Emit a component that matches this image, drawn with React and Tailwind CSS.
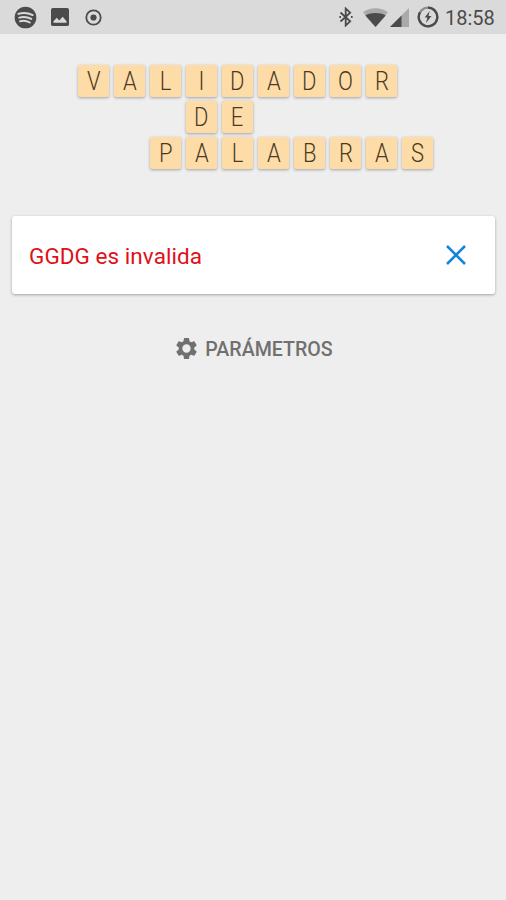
const WORDS = [
  { text: 'VALIDADOR', indent: '' },
  { text: 'DE', indent: 'pl-[108px]' },
  { text: 'PALABRAS', indent: 'pl-[72px]' },
];

function Tile({ letter }) {
  return (
    <div className="flex h-[32px] w-[31px] items-center justify-center rounded-[2px] bg-[#fddca8] shadow-[0_1px_3px_rgba(0,0,0,0.32)]">
      <span className="scale-x-[0.88] pt-[1px] text-[25px] leading-none font-light text-[#4a3a24]">{letter}</span>
    </div>
  );
}

function StatusBar() {
  return (
    <header className="flex h-[34px] items-center justify-between bg-[#dadada] pr-[10px] pl-[14px] text-[#4b4b4b]">
      <div className="flex items-center">
        <svg className="h-[23px] w-[23px]" viewBox="0 0 24 24" fill="none">
          <circle cx="12" cy="12" r="11.3" fill="currentColor" />
          <path d="M4.5 8.2c5-1.5 10.500-1 15 1.300M5.500 12.200c4.300-1.200 8.600-.7 12.500 1.300M6.300 15.900c3.600-.9 7-.5 10.200 1.300" stroke="#dadada" strokeWidth="2" strokeLinecap="round" />
        </svg>
        <svg className="ml-[14px] h-[18px] w-[18px]" viewBox="0 0 18 18">
          <rect width="18" height="18" rx="1.8" fill="currentColor" />
          <path d="M2.500 14.800v-1.600l3.300-3.500 2.400 2.700 3.500-3.700 3.800 4.500v1.600z" fill="#dadada" />
        </svg>
        <svg className="ml-[16px] h-[17px] w-[17px]" viewBox="0 0 17 17">
          <circle cx="8.500" cy="8.500" r="7.200" fill="none" stroke="currentColor" strokeWidth="1.800" />
          <circle cx="8.500" cy="8.500" r="3.100" fill="currentColor" />
        </svg>
      </div>
      <div className="flex items-center">
        <svg className="h-[20px] w-[14px]" viewBox="0 0 14 20" fill="none" stroke="currentColor" strokeWidth="1.800">
          <path d="M1.500 5.500 11.200 14.300 6.700 18.500V1.500l4.500 4.200-9.700 8.800" />
          <path d="M12 8.900h1.600v2H12zM.4 9h1.600v2H.4z" fill="currentColor" stroke="none" />
        </svg>
        <svg className="ml-[10px] h-[19px] w-[25px]" viewBox="0 0 25 19">
          <path d="M0 4.200C7-1 18-1 25 4.200L12.500 19z" fill="#aaa" />
          <path d="M2.300 7.400c6-3.200 14.400-3.200 20.400 0L12.500 19z" fill="currentColor" />
        </svg>
        <svg className="ml-[2px] h-[19px] w-[19px]" viewBox="0 0 19 19">
          <path d="M0 19 19 0v19z" fill="#aaa" />
          <path d="M0 19 11.500 7.500V19z" fill="currentColor" />
        </svg>
        <svg className="ml-[8px] h-[22px] w-[22px]" viewBox="0 0 22 22" fill="none">
          <circle cx="11" cy="11" r="9.300" stroke="#8b8b8b" strokeWidth="2.300" />
          <path d="M11 1.700a9.300 9.300 0 1 1-8 4.600" stroke="currentColor" strokeWidth="2.300" />
          <path d="m12.700 5-5 6.500h2.700L9 17l5.500-7h-3z" fill="currentColor" />
        </svg>
        <span className="ml-[6px] w-[51px] pt-[2px] text-[20px] leading-none whitespace-nowrap">18:58</span>
      </div>
    </header>
  );
}

export default function App() {
  return (
    <div className="min-h-[900px] w-full bg-[#eeeeee] font-[Roboto,sans-serif]">
      <StatusBar />
      <h1 className="flex flex-col gap-[4px] pt-[31px] pl-[78px]">
        {WORDS.map(({ text, indent }) => (
          <div key={text} className={`flex gap-[5px] ${indent}`}>
            {text.split('').map((letter, i) => (
              <Tile key={i} letter={letter} />
            ))}
          </div>
        ))}
      </h1>
      <main className="pr-[11px] pl-[12px] pt-[47px]">
        <section className="flex h-[78px] items-center justify-between rounded-[3px] bg-white pr-[29px] pl-[17px] shadow-[0_1px_3px_rgba(0,0,0,0.32)]">
          <p className="pt-[2px] text-[22.5px] leading-none tracking-[0.050px] text-[#e01019]">GGDG es invalida</p>
          <button aria-label="Borrar" className="text-[#1685d9]">
            <svg className="h-[20px] w-[20px]" viewBox="0 0 20 20" fill="none" stroke="currentColor" strokeWidth="2.600">
              <path d="m1 1 18 18M19 1 1 19" />
            </svg>
          </button>
        </section>
        <button className="mx-auto mt-[42px] flex items-center gap-[6px] text-[#707070]">
          <svg className="h-[25px] w-[25px]" viewBox="0 0 24 24" fill="currentColor">
            <path d="M19.430 12.980c.04-.32.07-.64.07-.98s-.03-.66-.07-.98l2.110-1.650c.19-.15.24-.42.12-.64l-2-3.460c-.12-.22-.39-.3-.61-.22l-2.490 1c-.52-.4-1.080-.73-1.690-.98l-.38-2.650C14.460 2.180 14.250 2 14 2h-4c-.25 0-.46.18-.49.42l-.38 2.650c-.61.25-1.170.59-1.690.98l-2.490-1c-.23-.09-.49 0-.61.22l-2 3.460c-.13.22-.07.49.12.64l2.110 1.650c-.04.32-.07.65-.07.98s.03.66.07.98l-2.110 1.650c-.19.15-.24.42-.12.64l2 3.460c.12.22.39.3.61.22l2.490-1c.52.4 1.080.73 1.690.98l.38 2.650c.03.24.24.42.49.42h4c.25 0 .46-.18.49-.42l.38-2.650c.61-.25 1.170-.59 1.690-.98l2.490 1c.23.09.49 0 .61-.22l2-3.460c.12-.22.07-.49-.12-.64zM12 16a4 4 0 1 1 0-8 4 4 0 0 1 0 8" />
          </svg>
          <span className="pt-[2px] text-[19.600px] leading-none font-medium">PARÁMETROS</span>
        </button>
      </main>
    </div>
  );
}
